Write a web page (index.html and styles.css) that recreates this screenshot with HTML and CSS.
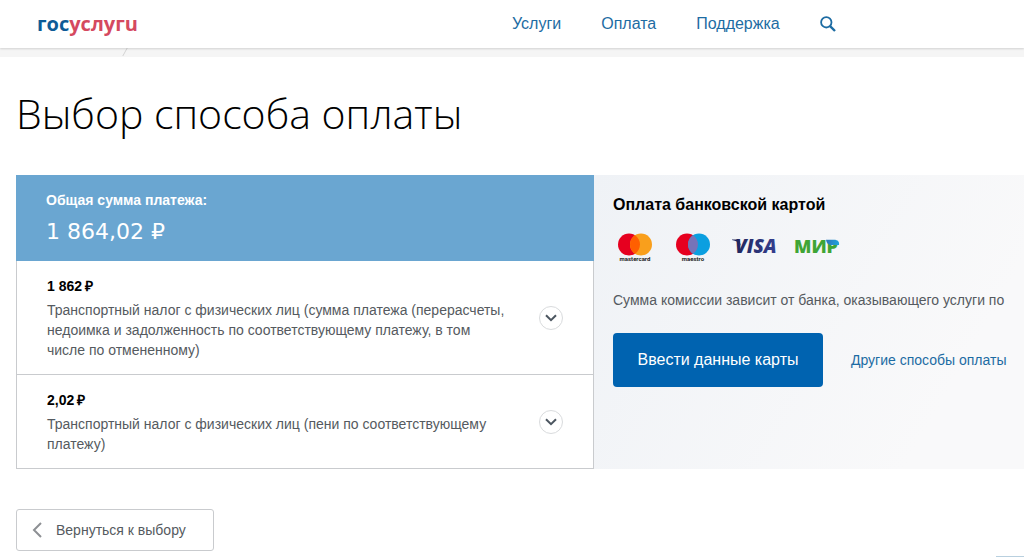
FILE: index.html
```html
<!DOCTYPE html>
<html lang="ru">
<head>
    <meta charset="UTF-8">
    <meta name="viewport" content="width=device-width, initial-scale=1.0">
    <title>Выбор способа оплаты</title>
    <link rel="stylesheet" href="styles.css">
</head>
<body>
    <header class="header">
        <a href="#" class="logo"><span class="logo-blue">гос</span><span class="logo-red">услугu</span></a>
        <nav class="nav">
            <a href="#">Услуги</a>
            <a href="#">Оплата</a>
            <a href="#">Поддержка</a>
            <button class="search" type="button" aria-label="Поиск">
                <svg width="16" height="16" viewBox="0 0 16 16">
                    <circle cx="6.3" cy="6.3" r="5.2" fill="none" stroke="#1d6ca3" stroke-width="1.8"/>
                    <path d="M9.8 9.8 L15 15" stroke="#1d6ca3" stroke-width="2.4"/>
                </svg>
            </button>
        </nav>
    </header>
    <div class="crumbs">
        <svg width="8" height="8" viewBox="0 0 8 8"><path d="M1.5 8.5 L6.5 -0.5" stroke="#d4d4d4" stroke-width="1"/></svg>
    </div>

    <main class="content">
        <h1>Выбор способа оплаты</h1>

        <div class="payment">
            <section class="bill">
                <div class="total">
                    <p class="total-label">Общая сумма платежа:</p>
                    <p class="total-sum">1 864,02 <span class="rub">₽</span></p>
                </div>
                <div class="bill-item">
                    <div class="bill-info">
                        <p class="bill-sum">1 862<span class="rub">₽</span></p>
                        <p class="bill-text">Транспортный налог с физических лиц (сумма платежа (перерасчеты, недоимка и задолженность по соответствующему платежу, в том числе по отмененному)</p>
                    </div>
                    <button class="toggle" type="button" aria-label="Подробнее">
                        <svg width="12" height="8" viewBox="0 0 12 8"><path d="M1 1.2 L6 6.2 L11 1.2" fill="none" stroke="#4c5660" stroke-width="2"/></svg>
                    </button>
                </div>
                <div class="bill-item">
                    <div class="bill-info">
                        <p class="bill-sum">2,02<span class="rub">₽</span></p>
                        <p class="bill-text">Транспортный налог с физических лиц (пени по соответствующему платежу)</p>
                    </div>
                    <button class="toggle" type="button" aria-label="Подробнее">
                        <svg width="12" height="8" viewBox="0 0 12 8"><path d="M1 1.2 L6 6.2 L11 1.2" fill="none" stroke="#4c5660" stroke-width="2"/></svg>
                    </button>
                </div>
            </section>

            <section class="card-pay">
                <h2>Оплата банковской картой</h2>
                <div class="card-logos">
                    <svg width="36" height="30" viewBox="0 0 36 30">
                        <circle cx="12" cy="11.5" r="11" fill="#e6001f"/>
                        <circle cx="24" cy="11.5" r="11" fill="#f99f1c"/>
                        <path d="M18 2.3 A11 11 0 0 1 18 20.7 A11 11 0 0 1 18 2.3" fill="#ff5f00"/>
                        <text x="18" y="28" class="brand-name">mastercard</text>
                    </svg>
                    <svg width="36" height="30" viewBox="0 0 36 30">
                        <circle cx="12" cy="11.5" r="11" fill="#e6001f"/>
                        <circle cx="24" cy="11.5" r="11" fill="#0b9fe0"/>
                        <path d="M18 2.3 A11 11 0 0 1 18 20.7 A11 11 0 0 1 18 2.3" fill="#7673b8"/>
                        <text x="18" y="28" class="brand-name">maestro</text>
                    </svg>
                    <svg width="40" height="30" viewBox="0 0 40 30">
                        <defs>
                            <linearGradient id="visa" x1="0" x2="1"><stop offset="0" stop-color="#20265c"/><stop offset="1" stop-color="#343f8f"/></linearGradient>
                        </defs>
                        <path d="M-1 6.6 H6 L8 13 C6 9.6 3 7.6 -1 7.1 Z" fill="#20265c"/>
                        <text x="2" y="20" class="visa-name" fill="url(#visa)">VISA</text>
                    </svg>
                    <svg width="46" height="30" viewBox="0 0 46 30">
                        <defs>
                            <linearGradient id="mir" x1="0" x2="1"><stop offset="0" stop-color="#2f73b8"/><stop offset="1" stop-color="#1fa5dc"/></linearGradient>
                        </defs>
                        <text x="-1" y="20" class="mir-name" fill="#3fa535">МИР</text>
                        <path d="M31 6.8 H39 C43 6.8 44.5 9 44 12 H35.5 C33 12 31.5 10 31 6.8 Z" fill="url(#mir)"/>
                    </svg>
                </div>
                <p class="fee">Сумма комиссии зависит от банка, оказывающего услуги по</p>
                <div class="actions">
                    <button class="button" type="button">Ввести данные карты</button>
                    <a href="#">Другие способы оплаты</a>
                </div>
            </section>
        </div>

        <button class="back" type="button">
            <svg width="10" height="16" viewBox="0 0 10 16"><path d="M9 1 L2 8 L9 15" fill="none" stroke="#8d9094" stroke-width="2"/></svg>
            Вернуться к выбору
        </button>
    </main>
    <div class="helper"></div>
</body>
</html>
```
FILE: styles.css
```css
* {
    box-sizing: border-box;
}
body {
    font-family: "Liberation Sans", Arial, sans-serif;
    font-size: 14px;
    line-height: 20px;
    color: #555a60;
    background: #fff;
    margin: 0;
    overflow-x: hidden;
}
h1, h2, p {
    margin: 0;
}
button {
    font-family: inherit;
    cursor: pointer;
}
a {
    color: #1d6ca3;
    text-decoration: none;
}
.header {
    display: flex;
    align-items: center;
    position: relative;
    height: 48px;
    padding-left: 37px;
    background: #fff;
    box-shadow: 0 1px 2px rgba(0, 0, 0, 0.15);
}
.logo {
    width: 475px;
    font-family: "Open Sans", sans-serif;
    font-size: 20px;
    font-weight: 700;
}
.logo-blue {
    color: #0d5b96;
}
.logo-red {
    color: #d5495f;
}
.nav {
    display: flex;
    align-items: center;
    gap: 40px;
    font-size: 16px;
}
.search {
    display: flex;
    padding: 0;
    border: none;
    background: none;
}
.crumbs {
    height: 9px;
    padding-left: 121px;
    background: #f5f5f5;
}
.crumbs svg {
    display: block;
}
.content {
    padding: 30px 0 6px 16px;
}
h1 {
    font-family: "Open Sans", sans-serif;
    font-size: 41px;
    font-weight: 300;
    line-height: 52px;
    color: #000;
}
.payment {
    display: grid;
    grid-template-columns: 578px minmax(0, 1fr);
    margin-top: 36px;
}
.bill {
    border: 1px solid #c9cbce;
    border-top: none;
}
.total {
    height: 86px;
    margin: 0 -1px;
    padding: 15px 30px;
    background: #6aa6d1;
    color: #fff;
}
.total-label {
    font-weight: 700;
}
.total-sum {
    margin-top: 8px;
    font-family: "DejaVu Sans", sans-serif;
    font-size: 22px;
    line-height: 28px;
}
.bill-item {
    display: flex;
    align-items: center;
    justify-content: space-between;
    padding: 15px 30px 14px;
}
.bill-item + .bill-item {
    border-top: 1px solid #c9cbce;
}
.bill-info {
    width: 460px;
}
.bill-sum {
    margin-bottom: 4px;
    font-weight: 700;
    color: #000;
}
.bill-sum .rub {
    margin-left: 3px;
}
.toggle {
    display: flex;
    align-items: center;
    justify-content: center;
    width: 24px;
    height: 24px;
    padding: 0;
    border: 1px solid #d9dbdd;
    border-radius: 50%;
    background: #fff;
}
.card-pay {
    padding: 20px 0 0 19px;
    background: linear-gradient(120deg, #eff2f6, #f9f9fa 80%);
}
h2 {
    font-size: 16px;
    line-height: 20px;
    color: #000;
}
.card-logos {
    display: flex;
    margin-top: 18px;
    padding-left: 4px;
    gap: 22px;
}
.card-logos svg {
    overflow: visible;
}
.brand-name {
    font: 700 6px Roboto, sans-serif;
    text-anchor: middle;
    fill: #222;
}
.visa-name {
    font: italic 800 19px "Open Sans", sans-serif;
}
.mir-name {
    font: 800 18px "Open Sans", sans-serif;
}
.fee {
    margin-top: 27px;
    white-space: nowrap;
}
.actions {
    display: flex;
    align-items: center;
    gap: 28px;
    margin-top: 23px;
    white-space: nowrap;
}
.button {
    width: 210px;
    height: 54px;
    border: none;
    border-radius: 4px;
    background: #0063b0;
    color: #fff;
    font-size: 16px;
}
.back {
    display: flex;
    align-items: center;
    gap: 14px;
    width: 198px;
    height: 42px;
    margin-top: 40px;
    padding: 0 15px;
    border: 1px solid #c9cbce;
    border-radius: 3px;
    background: #fff;
    color: #555a60;
    font-size: 14px;
}
.helper {
    position: fixed;
    right: 0;
    bottom: 0;
    width: 28px;
    height: 1px;
    background: #b9d0df;
}
```
